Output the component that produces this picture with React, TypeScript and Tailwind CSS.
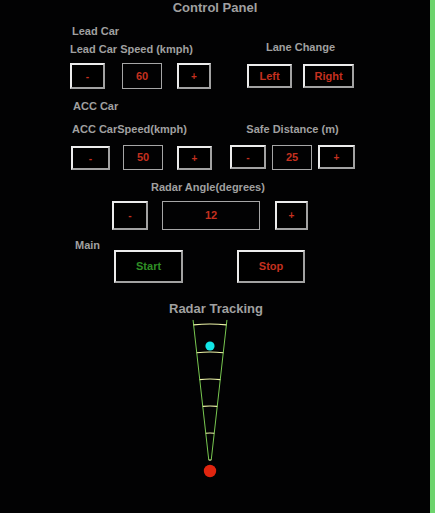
import React from 'react';

const font = { fontFamily: '"Liberation Sans", Arial, sans-serif' };

const Btn: React.FC<{ w: string; h: string; className?: string; children: React.ReactNode; tone?: string }> = ({ w, h, className = '', children, tone = 'text-[#c4301f]' }) => (
  <div
    className={`${w} ${h} ${className} ${tone} flex items-center justify-center border-2 border-t-[#ececec] border-l-[#ececec] border-r-[#a2a2a2] border-b-[#a2a2a2] text-[10px] font-bold bg-black`}
  >
    {children}
  </div>
);

const Val: React.FC<{ w: string; h: string; className?: string; children: React.ReactNode }> = ({ w, h, className = '', children }) => (
  <div className={`${w} ${h} ${className} flex items-center justify-center border border-[#a6a6a6] text-[11px] font-bold text-[#c4301f]`}>
    {children}
  </div>
);

const Label: React.FC<{ className?: string; children: React.ReactNode }> = ({ className = '', children }) => (
  <div className={`h-[14px] leading-[14px] text-[11px] font-bold text-[#a0a0a0] whitespace-nowrap ${className}`}>{children}</div>
);

const Radar: React.FC = () => {
  const cx = 210;
  const cy = 471;
  const s = Math.sin((6.4 * Math.PI) / 180);
  const c = Math.cos((6.4 * Math.PI) / 180);
  const radii = [147, 119, 92, 65, 38, 11];
  return (
    <svg width="50" height="166" viewBox="185 316 50 166" className="ml-[185px] block">
      <line x1={cx - 11 * s} y1={cy - 11 * c} x2={cx - 152 * s} y2={cy - 152 * c} stroke="#78c850" strokeWidth="1" />
      <line x1={cx + 11 * s} y1={cy - 11 * c} x2={cx + 152 * s} y2={cy - 152 * c} stroke="#78c850" strokeWidth="1" />
      {radii.map((r) => (
        <path
          key={r}
          d={`M ${cx - r * s} ${cy - r * c} A ${r} ${r} 0 0 1 ${cx + r * s} ${cy - r * c}`}
          stroke="#eef5a8"
          strokeWidth="1.2"
          fill="none"
        />
      ))}
      <circle cx={210} cy={346} r={4.6} fill="#12e6e6" />
      <circle cx={cx} cy={cy} r={6.2} fill="#e0250f" />
    </svg>
  );
};

export default function App() {
  return (
    <div className="w-[435px] h-[513px] bg-[#020203] flex overflow-hidden" style={font}>
      <div className="w-[430px] h-full flex flex-col">
        <div className="h-[15px] leading-[15px] text-[13px] font-bold text-[#a0a0a0] text-center">Control Panel</div>

        <Label className="mt-[9px] ml-[72px]">Lead Car</Label>

        <div className="flex">
          <div className="ml-[70px] w-[141px] flex flex-col">
            <Label className="mt-[4px]">Lead Car Speed (kmph)</Label>
            <div className="flex mt-[7px]">
              <Btn w="w-[35px]" h="h-[26px]">-</Btn>
              <Val w="w-[40px]" h="h-[26px]" className="ml-[17px]">60</Val>
              <Btn w="w-[34px]" h="h-[26px]" className="ml-[15px]">+</Btn>
            </div>
          </div>
          <div className="ml-[36px] w-[107px] flex flex-col">
            <Label className="mt-[2px] text-center">Lane Change</Label>
            <div className="flex mt-[10px]">
              <Btn w="w-[45px]" h="h-[24px]" className="text-[11px]">Left</Btn>
              <Btn w="w-[51px]" h="h-[24px]" className="ml-[11px] text-[11px]">Right</Btn>
            </div>
          </div>
        </div>

        <Label className="mt-[10px] ml-[73px]">ACC Car</Label>

        <div className="flex mt-[9px]">
          <div className="ml-[71px] w-[141px] flex flex-col">
            <Label className="ml-[1px]">ACC CarSpeed(kmph)</Label>
            <div className="flex mt-[10px]">
              <Btn w="w-[39px]" h="h-[24px]">-</Btn>
              <Val w="w-[40px]" h="h-[25px]" className="ml-[13px] -mt-[1px]">50</Val>
              <Btn w="w-[35px]" h="h-[24px]" className="ml-[14px]">+</Btn>
            </div>
          </div>
          <div className="ml-[18px] w-[125px] flex flex-col">
            <Label className="text-center">Safe Distance (m)</Label>
            <div className="flex mt-[9px]">
              <Btn w="w-[36px]" h="h-[24px]">-</Btn>
              <Val w="w-[40px]" h="h-[25px]" className="ml-[6px]">25</Val>
              <Btn w="w-[37px]" h="h-[24px]" className="ml-[6px]">+</Btn>
            </div>
          </div>
        </div>

        <Label className="mt-[10px] ml-[151px]">Radar Angle(degrees)</Label>

        <div className="flex mt-[7px] ml-[112px]">
          <Btn w="w-[36px]" h="h-[29px]">-</Btn>
          <Val w="w-[98px]" h="h-[29px]" className="ml-[14px]">12</Val>
          <Btn w="w-[33px]" h="h-[29px]" className="ml-[15px]">+</Btn>
        </div>

        <div className="flex items-start mt-[8px]">
          <Label className="ml-[75px]">Main</Label>
          <Btn w="w-[69px]" h="h-[33px]" className="ml-[14px] mt-[12px] text-[11px]" tone="text-[#2f8f25]">Start</Btn>
          <Btn w="w-[68px]" h="h-[33px]" className="ml-[54px] mt-[12px] text-[11px]">Stop</Btn>
        </div>

        <div className="mt-[18px] ml-[169px] h-[15px] leading-[15px] text-[13px] font-bold text-[#a0a0a0] whitespace-nowrap">Radar Tracking</div>

        <Radar />
      </div>
      <div className="w-[5px] h-full bg-[#6dd46d]" />
    </div>
  );
}
